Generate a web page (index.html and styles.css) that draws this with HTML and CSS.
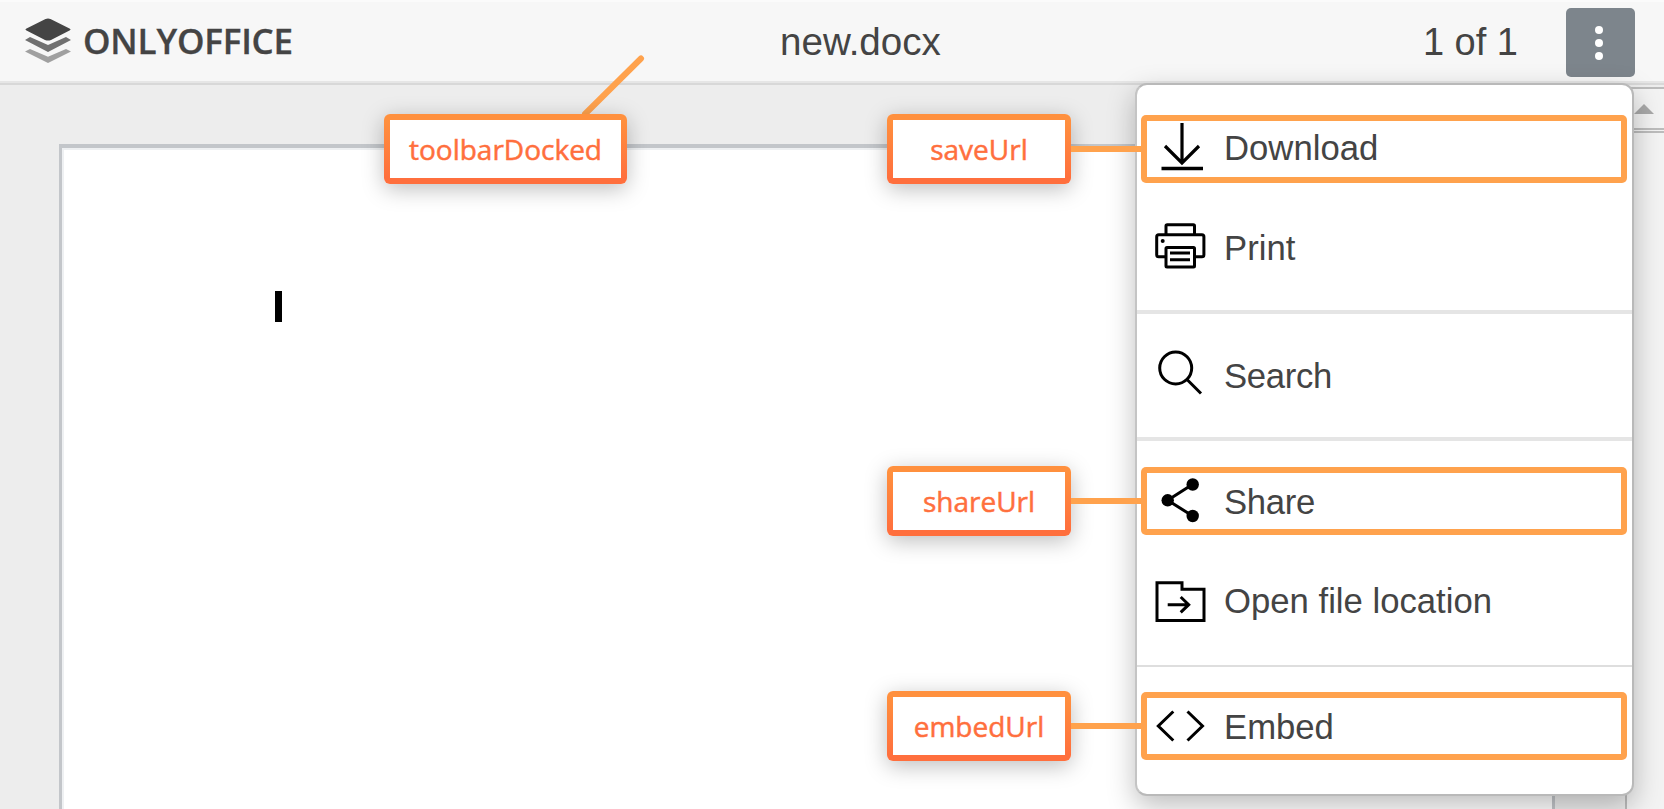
FILE: index.html
```html
<!DOCTYPE html>
<html lang="en">
<head>
<meta charset="utf-8">
<title>new.docx</title>
<link rel="stylesheet" href="styles.css">
</head>
<body>
<div class="app">
  <header class="toolbar">
    <div class="brand">
      <svg class="brand-icon" viewBox="0 0 48 46" width="48" height="46">
        <path fill="#a0a0a0" d="M1 33.500 6 31 24 38.800 42 31l5 2.500L24 45z"/>
        <path fill="#707070" d="M1 22 6 19 24 27 42 19l5 3L24 34z"/>
        <path fill="#444" d="M21.500 1q2.500-1.200 5 0L45.500 10.500q2 1 0 2L27 22q-3 1.200-6 0L2.500 12.500q-2-1 0-2z"/>
      </svg>
      <span class="brand-name">ONLYOFFICE</span>
    </div>
    <div class="doc-title">new.docx</div>
    <div class="tools">
      <span class="pages">1 of 1</span>
      <button class="more" aria-label="Menu"><i></i><i></i><i></i></button>
    </div>
  </header>
  <main class="workspace">
    <div class="page"><div class="caret"></div></div>
    <div class="scrollbar">
      <div class="scroll-up"><svg width="20" height="10" viewBox="0 0 20 10"><path fill="#a9a9a9" d="M10 0 20 10H0z"/></svg></div>
    </div>
  </main>

  <nav class="menu">
    <a class="item marked download">
      <svg class="icon" viewBox="0 0 80 68"><path d="M41 8V48M24 31l17 17 17-17" stroke-width="3.200"/><path d="M20.500 53.500H62" stroke-width="3.600"/></svg>
      <span>Download</span>
    </a>
    <a class="item print">
      <svg class="icon" viewBox="0 0 80 68"><path d="M25 20V11q0-1.200 1.200-1.200H52.300q1.200 0 1.200 1.200V20"/><rect x="15.700" y="19.800" width="47.200" height="22" rx="2"/><rect x="25" y="32.500" width="28.500" height="19.500" rx="1" fill="#fff"/><path d="M29 38H49M29 44.700H49"/><circle cx="21.700" cy="26" r="2" class="solid"/></svg>
      <span>Print</span>
    </a>
    <hr>
    <a class="item search">
      <svg class="icon" viewBox="0 0 80 68"><circle cx="34.700" cy="26" r="16"/><path d="m46 37.500 14 14"/></svg>
      <span>Search</span>
    </a>
    <hr>
    <a class="item marked share">
      <svg class="icon" viewBox="0 0 80 68"><path d="m51.700 17.300-25 16 25 15.700"/><g class="solid"><circle cx="26.700" cy="33.300" r="6.200"/><circle cx="51.700" cy="17.500" r="6.200"/><circle cx="51.700" cy="49" r="6.200"/></g></svg>
      <span>Share</span>
    </a>
    <a class="item location">
      <svg class="icon" viewBox="0 0 80 68"><path d="M16 16.800H41V23.300H63V54.500H16z"/><path d="M26.700 38.700H47M39.700 31l8 7.700-8 7.700"/></svg>
      <span>Open file location</span>
    </a>
    <hr class="thin">
    <a class="item marked embed">
      <svg class="icon" viewBox="0 0 80 68"><path d="m32.300 19.500-15 14.500 15 14.500M46.500 19.500l15 14.500-15 14.500"/></svg>
      <span>Embed</span>
    </a>
  </nav>

  <svg class="pointer" width="70" height="66" viewBox="0 0 70 66"><path d="M5 62 61 6.500"/></svg>
  <div class="label label-toolbar"><span>toolbarDocked</span></div>
  <div class="label label-save"><span>saveUrl</span></div>
  <div class="label label-share"><span>shareUrl</span></div>
  <div class="label label-embed"><span>embedUrl</span></div>
</div>
</body>
</html>
```
FILE: styles.css
```css
* { box-sizing: border-box; }
body { margin: 0; background: #ededed; }

.app {
  position: relative;
  display: flex;
  flex-direction: column;
  width: 1664px;
  height: 809px;
  overflow: hidden;
  font-family: "Liberation Sans", Arial, sans-serif;
  color: #444;
}

/* Toolbar */
.toolbar {
  display: grid;
  grid-template-columns: 756px auto 1fr;
  align-items: center;
  height: 85px;
  padding: 0 29px 0 24px;
  background: #f7f7f7;
  border-bottom: 2px solid #d8d8d8;
  box-shadow: inset 0 -2px #e6e6e6, inset 0 2px #fbfbfb;
}
.brand { display: flex; align-items: center; gap: 11px; }
.brand-icon { flex: none; margin-top: -1px; }
.brand-name {
  font: 600 35px/40px "Open Sans", sans-serif;
  letter-spacing: -0.2px;
  margin-top: -1px;
  -webkit-text-stroke: .3px #444;
}
.doc-title { font-size: 38.600px; line-height: 44px; }
.tools { display: flex; align-items: center; justify-content: flex-end; gap: 48px; }
.pages { font-size: 38px; line-height: 44px; }
.more {
  display: flex;
  flex-direction: column;
  align-items: center;
  justify-content: center;
  gap: 5px;
  width: 69px;
  height: 69px;
  margin-top: 2px;
  padding: 0 3px 0 0;
  border: 0;
  border-radius: 5px;
  background: #7d858c;
}
.more i { width: 8px; height: 8px; border-radius: 50%; background: #fff; }

/* Document area */
.workspace { display: flex; flex: 1; padding-left: 59px; }
.page {
  width: 1496px;
  margin-top: 59px;
  padding: 143px 0 0 213px;
  background: #fff;
  border: 3px solid #c3c6ca;
  border-top-width: 4px;
  border-bottom: 0;
  box-shadow: inset 2px 2px #eef0f2;
}
.caret { width: 7px; height: 31px; background: #000; }
.scrollbar {
  flex: 1;
  margin: 2px 0 0 70px;
  border: 2px solid #bcbcbc;
  border-right: 0;
  border-bottom: 0;
  background: #f3f3f3;
}
.scroll-up {
  height: 44px;
  padding: 15px 0 0 7px;
  border-bottom: 5px double #bcbcbc;
}
.scroll-up svg { display: block; }

/* Dropdown menu */
.menu {
  position: absolute;
  left: 1135px;
  top: 83px;
  width: 499px;
  height: 713px;
  padding-top: 30px;
  background: #fff;
  border: 2px solid #b9b9b9;
  border-left-color: #c4c4c4;
  border-radius: 12px;
  box-shadow: 0 10px 28px rgba(0, 0, 0, .26);
  font-size: 34.700px;
}
.item {
  display: flex;
  align-items: center;
  width: 486px;
  height: 68px;
  margin-left: 4px;
}
.item span { white-space: nowrap; margin-left: 3px; }
.marked { border-radius: 5px; box-shadow: inset 0 0 0 6px #ffa24d; }
.icon {
  flex: none;
  width: 80px;
  height: 68px;
  fill: none;
  stroke: #000;
  stroke-width: 3;
}
.icon .solid { fill: #000; stroke: none; }
.download span, .print span { padding-bottom: 1px; }
.share span, .embed span { padding-top: 3px; }
.search span, .share span { letter-spacing: -.3px; }
.print { margin-top: 32px; }
.search { margin-top: 28px; }
.location { margin-top: 31px; }
.location span { padding-top: 3px; }
.share { margin-top: 26px; }
.embed { margin-top: 25px; }
.menu hr { height: 4px; margin: 27px 0 0; border: 0; background: #e5e5e5; }
.menu .thin { height: 2px; margin-top: 31px; background: #dedede; }

/* Callouts */
.label {
  position: absolute;
  left: 887px;
  display: flex;
  width: 184px;
  height: 70px;
  padding: 6px;
  border-radius: 6px;
  background: linear-gradient(#ff903e 8%, #ff6f3d 92%);
  box-shadow: 0 5px 22px rgba(0, 0, 0, .26);
  color: #ff6f3d;
  font: 500 28px/58px "Open Sans", sans-serif;
  -webkit-text-stroke: .5px #ff6f3d;
}
.label span { flex: 1; background: #fff; text-align: center; line-height: 58px; }
.label::after {
  content: "";
  position: absolute;
  left: 184px;
  top: 32px;
  width: 71px;
  height: 6px;
  background: #ffa24d;
}
.label-toolbar { left: 384px; top: 114px; width: 243px; }
.label-toolbar::after { display: none; }
.label-save { top: 114px; }
.label-share { top: 466px; }
.label-embed { top: 691px; }
.pointer {
  position: absolute;
  left: 580px;
  top: 52px;
  fill: none;
  stroke: #ffa24d;
  stroke-width: 6;
  stroke-linecap: round;
}
```
